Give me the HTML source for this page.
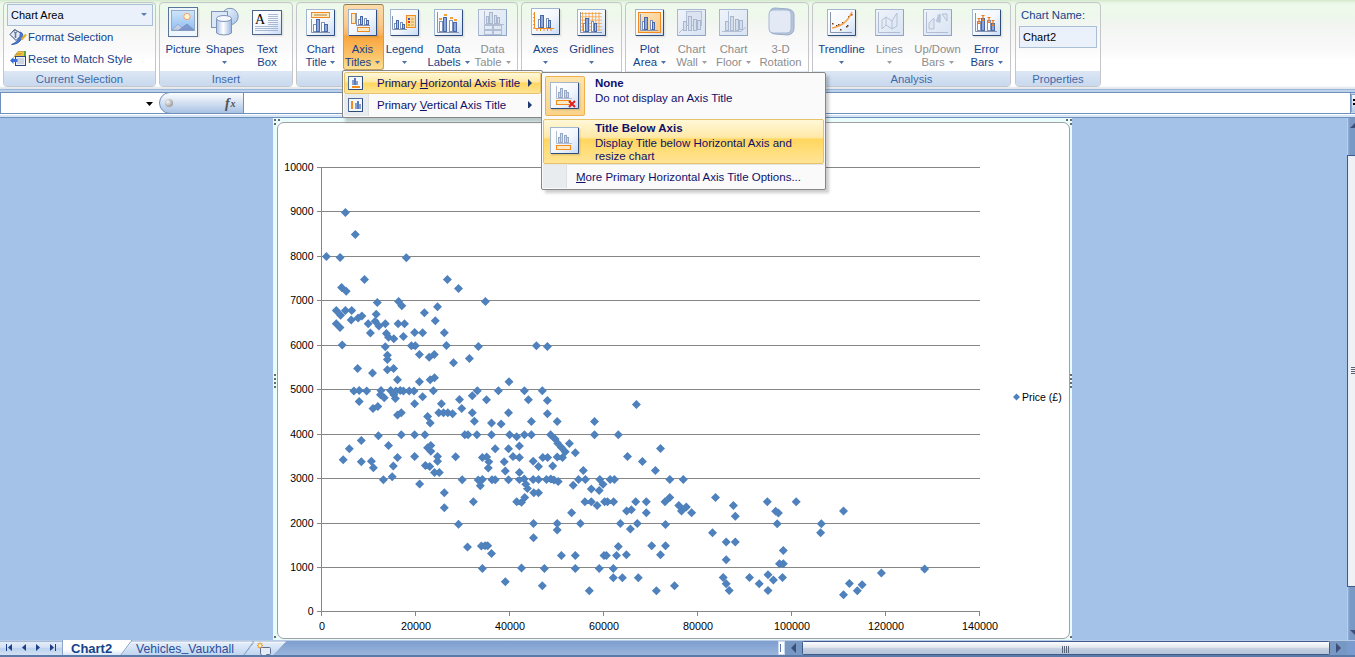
<!DOCTYPE html>
<html><head><meta charset="utf-8">
<style>
*{margin:0;padding:0;box-sizing:border-box}
html,body{width:1355px;height:657px;overflow:hidden;background:#a4c2e8;font-family:"Liberation Sans",sans-serif;font-size:11.3px;color:#15428b}
.a{position:absolute}
#ribbon{left:0;top:0;width:1355px;height:89px;background:linear-gradient(#d2e8cb 0px,#e4f4e0 2px,#eefaec 5px,#edf8ea 14px,#f1f5ef 24px,#f6f7f6 38px,#f9f9f9 50px,#ffffff 60px,#ffffff 86px,#e2e5e9 88px)}
.grp{position:absolute;top:2px;height:85px;border:1px solid #c4c6c9;border-radius:4px;background:linear-gradient(rgba(255,255,255,0) 0,rgba(255,255,255,.2) 40px,rgba(255,255,255,.5) 68px)}
.glab{position:absolute;left:0;right:0;bottom:0;height:15px;background:linear-gradient(#dde7f5,#c8d8ee);color:#3e6aaa;text-align:center;line-height:17px;border-radius:0 0 3px 3px}
.btn{position:absolute;text-align:center;line-height:13px;white-space:nowrap}
.dis{color:#8d8d8d}
.ico{position:absolute}
.mt{color:#10106a;line-height:13px;white-space:nowrap;font-size:11.5px}
.lbl{width:80px;text-align:center;line-height:13px;white-space:nowrap;font-size:11.3px}
.ylab{left:270px;width:43.5px;text-align:right;font-size:10.5px;color:#000;line-height:12px}
.xlab{top:620px;width:60px;text-align:center;font-size:10.8px;color:#000;line-height:12px}
</style></head><body>
<div id="ribbon" class="a">
  <!-- Current Selection -->
  <div class="grp" style="left:3px;width:153px">
    <div class="a" style="left:3px;top:1px;width:146px;height:22px;border:1px solid #a9bfd6;background:#eaf1fb;color:#000;line-height:20px;padding-left:3px;font-size:11px">Chart Area</div>
    <div class="a" style="left:24px;top:28px;color:#15428b;line-height:13px;white-space:nowrap">Format Selection</div>
    <div class="a" style="left:24px;top:50px;color:#15428b;line-height:13px;white-space:nowrap">Reset to Match Style</div>
    <div class="glab">Current Selection</div>
  </div>
  <!-- Insert -->
  <div class="grp" style="left:159px;width:134px">
    <div class="glab">Insert</div>
  </div>
  <!-- Labels -->
  <div class="grp" style="left:296px;width:222px">
    <div class="glab">Labels</div>
  </div>
  <!-- Axes -->
  <div class="grp" style="left:521px;width:101px">
    <div class="glab">Axes</div>
  </div>
  <!-- Background -->
  <div class="grp" style="left:625px;width:184px">
    <div class="glab">Background</div>
  </div>
  <!-- Analysis -->
  <div class="grp" style="left:812px;width:199px">
    <div class="glab">Analysis</div>
  </div>
  <!-- Properties -->
  <div class="grp" style="left:1015px;width:86px">
    <div class="a" style="left:5px;top:6px;color:#15428b;line-height:13px;white-space:nowrap">Chart Name:</div>
    <div class="a" style="left:3px;top:23px;width:78px;height:22px;border:1px solid #a9bfd6;background:#eaf1fb;color:#000;line-height:20px;padding-left:3px;font-size:11px">Chart2</div>
    <div class="glab">Properties</div>
  </div>
</div>
<div class="a" style="left:343px;top:4px;width:41px;height:66px;border:1px solid #c2a060;border-top-color:#8e7a50;border-radius:3px;background:linear-gradient(#fcdcac 0px,#fbc98a 20px,#f9b25c 30px,#f8a43c 31px,#fbc56c 52px,#fde396 66px)"></div>
<div class="a lbl" style="left:143px;top:43px;color:#15428b">Picture</div>
<div class="a lbl" style="left:185px;top:43px;color:#15428b">Shapes</div>
<div class="a lbl" style="left:227px;top:43px;color:#15428b">Text</div>
<div class="a lbl" style="left:227px;top:56px;color:#15428b">Box</div>
<div class="a lbl" style="left:280.5px;top:43px;color:#15428b">Chart</div>
<div class="a" style="left:305.5px;top:56px;color:#15428b;line-height:13px;white-space:nowrap;font-size:11.3px">Title</div>
<div class="a lbl" style="left:322.5px;top:43px;color:#15428b">Axis</div>
<div class="a" style="left:344.7px;top:56px;color:#15428b;line-height:13px;white-space:nowrap;font-size:11.3px">Titles</div>
<div class="a lbl" style="left:364.5px;top:43px;color:#15428b">Legend</div>
<div class="a lbl" style="left:408.5px;top:43px;color:#15428b">Data</div>
<div class="a" style="left:427.4px;top:56px;color:#15428b;line-height:13px;white-space:nowrap;font-size:11.3px">Labels</div>
<div class="a lbl" style="left:452.5px;top:43px;color:#8d8d8d">Data</div>
<div class="a" style="left:474.5px;top:56px;color:#8d8d8d;line-height:13px;white-space:nowrap;font-size:11.3px">Table</div>
<div class="a lbl" style="left:505.5px;top:43px;color:#15428b">Axes</div>
<div class="a lbl" style="left:551.5px;top:43px;color:#15428b">Gridlines</div>
<div class="a lbl" style="left:609.5px;top:43px;color:#15428b">Plot</div>
<div class="a" style="left:633.1px;top:56px;color:#15428b;line-height:13px;white-space:nowrap;font-size:11.3px">Area</div>
<div class="a lbl" style="left:651.5px;top:43px;color:#8d8d8d">Chart</div>
<div class="a" style="left:676.2px;top:56px;color:#8d8d8d;line-height:13px;white-space:nowrap;font-size:11.3px">Wall</div>
<div class="a lbl" style="left:693.5px;top:43px;color:#8d8d8d">Chart</div>
<div class="a" style="left:716.1px;top:56px;color:#8d8d8d;line-height:13px;white-space:nowrap;font-size:11.3px">Floor</div>
<div class="a lbl" style="left:740.5px;top:43px;color:#8d8d8d">3-D</div>
<div class="a lbl" style="left:740.5px;top:56px;color:#8d8d8d">Rotation</div>
<div class="a lbl" style="left:801.5px;top:43px;color:#15428b">Trendline</div>
<div class="a lbl" style="left:849.5px;top:43px;color:#8d8d8d">Lines</div>
<div class="a lbl" style="left:897.5px;top:43px;color:#8d8d8d">Up/Down</div>
<div class="a" style="left:921.4px;top:56px;color:#8d8d8d;line-height:13px;white-space:nowrap;font-size:11.3px">Bars</div>
<div class="a lbl" style="left:946.5px;top:43px;color:#15428b">Error</div>
<div class="a" style="left:970.4px;top:56px;color:#15428b;line-height:13px;white-space:nowrap;font-size:11.3px">Bars</div>
<svg class="a" style="left:0;top:0" width="1355" height="89">
<defs>
<linearGradient id="gbox" x1="0" y1="0" x2="1" y2="1"><stop offset="0" stop-color="#ffffff"/><stop offset=".55" stop-color="#f3f7fd"/><stop offset="1" stop-color="#c9dbf6"/></linearGradient>
<linearGradient id="gdis" x1="0" y1="0" x2="1" y2="1"><stop offset="0" stop-color="#f0f4fa"/><stop offset="1" stop-color="#d8e3f3"/></linearGradient>
<linearGradient id="gbar" x1="0" y1="0" x2="1" y2="0"><stop offset="0" stop-color="#5f7fc4"/><stop offset=".5" stop-color="#a8bde8"/><stop offset="1" stop-color="#5a78b8"/></linearGradient>
<linearGradient id="gorg" x1="0" y1="0" x2="1" y2="1"><stop offset="0" stop-color="#fde3b8"/><stop offset="1" stop-color="#f9c98a"/></linearGradient>
<linearGradient id="gsky" x1="0" y1="0" x2="0" y2="1"><stop offset="0" stop-color="#cfe6fb"/><stop offset="1" stop-color="#8fbdf0"/></linearGradient>
<linearGradient id="gshape" x1="0" y1="0" x2="1" y2="1"><stop offset="0" stop-color="#f2f7fe"/><stop offset="1" stop-color="#a9c4ea"/></linearGradient>
<linearGradient id="gcyl" x1="0" y1="0" x2="1" y2="0"><stop offset="0" stop-color="#a9c2e6"/><stop offset=".45" stop-color="#ffffff"/><stop offset="1" stop-color="#9ab6e0"/></linearGradient>
</defs>
<rect x="169.5" y="8.5" width="30" height="29" fill="#000" opacity=".08"/><rect x="168.5" y="7.5" width="29" height="29" fill="#eef6fd" stroke="#5a7399"/><rect x="171.5" y="10.5" width="23" height="20" fill="url(#gsky)" stroke="#93a9c8"/><circle cx="187" cy="16.5" r="3.2" fill="#fff4d0" stroke="#f4a070"/><path d="M172 30L178 24L184 30z" fill="#c4cde6" stroke="#8a9ac0" stroke-width=".6"/><path d="M179 30L187 24L194 30z" fill="#7e98d0" stroke="#6f86bb" stroke-width=".6"/>
<circle cx="230" cy="16.5" r="8.2" fill="url(#gshape)" stroke="#7e93b6"/><rect x="211.5" y="11.5" width="16" height="16" fill="#dce8f8" stroke="#7e93b6"/><path d="M216.5 18.5V33A8 3 0 0 0 231.5 33V18.5" fill="url(#gcyl)" stroke="#7e93b6"/><ellipse cx="224" cy="18.5" rx="7.5" ry="3" fill="#f4f8fe" stroke="#7e93b6"/>
<path d="M222 61h5l-2.5 3z" fill="#4e6fa8"/>
<rect x="253.5" y="11.5" width="30" height="25" fill="#000" opacity=".08"/><rect x="252.5" y="10.5" width="29" height="24" fill="url(#gbox)" stroke="#4d648c"/><text x="255" y="24" font-family="Liberation Serif" font-size="14" fill="#000">A</text><path d="M268 14.5H278" stroke="#8a9fc0" stroke-width=".7"/><path d="M268 16.5H278" stroke="#8a9fc0" stroke-width=".7"/><path d="M268 18.5H278" stroke="#8a9fc0" stroke-width=".7"/><path d="M268 20.5H278" stroke="#8a9fc0" stroke-width=".7"/><path d="M268 22.5H278" stroke="#8a9fc0" stroke-width=".7"/><path d="M268 24.5H278" stroke="#8a9fc0" stroke-width=".7"/><path d="M255 26.5H278" stroke="#8a9fc0" stroke-width=".7"/><path d="M255 28.5H278" stroke="#8a9fc0" stroke-width=".7"/><path d="M255 30.5H278" stroke="#8a9fc0" stroke-width=".7"/>
<rect x="307.5" y="10.5" width="29" height="27" fill="#000" opacity=".08"/><rect x="306.5" y="9.5" width="28" height="26" fill="url(#gbox)" stroke="#a3b6d0"/><path d="M334.5 10V35.5H307" stroke="#2f4d7c" fill="none"/><rect x="311.5" y="12.5" width="18" height="5" fill="#fde9c4" stroke="#f28a1e"/><path d="M314 15H327" stroke="#a88438"/><path d="M311.5 19V32.5H330" stroke="#8795b0" fill="none"/><rect x="313.5" y="24.5" width="3" height="7" fill="#fdfeff" stroke="#7d93bd"/><rect x="316.5" y="19.5" width="3" height="12" fill="url(#gbar)" stroke="#4a67a6"/><rect x="321.5" y="22.5" width="3" height="9" fill="#fdfeff" stroke="#7d93bd"/><rect x="324.5" y="24.5" width="3" height="7" fill="url(#gbar)" stroke="#4a67a6"/>
<path d="M330 61h5l-2.5 3z" fill="#4e6fa8"/>
<rect x="349.5" y="10.5" width="29" height="27" fill="#000" opacity=".08"/><rect x="348.5" y="9.5" width="28" height="26" fill="url(#gbox)" stroke="#a3b6d0"/><path d="M376.5 10V35.5H349" stroke="#2f4d7c" fill="none"/><rect x="351.5" y="13.5" width="4" height="10" fill="#fde9c4" stroke="#f28a1e"/><path d="M356.5 13V25.5H370" stroke="#8795b0" fill="none"/><rect x="358.5" y="19.5" width="2" height="5" fill="#fdfeff" stroke="#7d93bd"/><rect x="360.5" y="16.5" width="2" height="8" fill="url(#gbar)" stroke="#4a67a6"/><rect x="364.5" y="18.5" width="2" height="6" fill="#fdfeff" stroke="#7d93bd"/><rect x="366.5" y="20.5" width="2" height="4" fill="url(#gbar)" stroke="#4a67a6"/><rect x="357.5" y="27.5" width="12" height="4" fill="#fde9c4" stroke="#f28a1e"/>
<path d="M375 61h5l-2.5 3z" fill="#4e6fa8"/>
<rect x="391.5" y="10.5" width="29" height="27" fill="#000" opacity=".08"/><rect x="390.5" y="9.5" width="28" height="26" fill="url(#gbox)" stroke="#a3b6d0"/><path d="M418.5 10V35.5H391" stroke="#2f4d7c" fill="none"/><path d="M392.5 16V29.5H407" stroke="#8795b0" fill="none"/><rect x="394.5" y="23.5" width="2" height="5" fill="#fdfeff" stroke="#7d93bd"/><rect x="396.5" y="20.5" width="2" height="8" fill="url(#gbar)" stroke="#4a67a6"/><rect x="400.5" y="22.5" width="2" height="6" fill="#fdfeff" stroke="#7d93bd"/><rect x="402.5" y="24.5" width="2" height="4" fill="url(#gbar)" stroke="#4a67a6"/><rect x="406.5" y="15.5" width="9" height="12" fill="#fbd9a0" stroke="#f28a1e"/><rect x="408" y="18" width="2" height="2" fill="#3050d0"/><path d="M411 19H414" stroke="#c8a060"/><rect x="408" y="21" width="2" height="2" fill="#e03030"/><path d="M411 22H414" stroke="#c8a060"/><rect x="408" y="24" width="2" height="2" fill="#e0b000"/><path d="M411 25H414" stroke="#c8a060"/>
<path d="M402 61h5l-2.5 3z" fill="#4e6fa8"/>
<rect x="435.5" y="10.5" width="29" height="27" fill="#000" opacity=".08"/><rect x="434.5" y="9.5" width="28" height="26" fill="url(#gbox)" stroke="#a3b6d0"/><path d="M462.5 10V35.5H435" stroke="#2f4d7c" fill="none"/><path d="M437.5 12V32.5H459" stroke="#8795b0" fill="none"/><rect x="439.5" y="21.5" width="3" height="10" fill="#fdfeff" stroke="#7d93bd"/><rect x="443.5" y="17.5" width="3" height="14" fill="url(#gbar)" stroke="#4a67a6"/><rect x="449.5" y="20.5" width="3" height="11" fill="#fdfeff" stroke="#7d93bd"/><rect x="453.5" y="22.5" width="3" height="9" fill="url(#gbar)" stroke="#4a67a6"/><rect x="439" y="18" width="3" height="2" fill="#f7a030"/><rect x="444" y="14" width="3" height="2" fill="#f7a030"/><rect x="450" y="17" width="3" height="2" fill="#f7a030"/><rect x="454" y="19" width="3" height="2" fill="#f7a030"/>
<path d="M465 61h5l-2.5 3z" fill="#4e6fa8"/>
<rect x="478.5" y="9.5" width="28" height="26" fill="url(#gdis)" stroke="#a9b8cf"/><path d="M506.5 10V35.5H479" stroke="#8fa3c2" fill="none"/><path d="M484.5 11V24.5H504" stroke="#b0bdd2" fill="none"/><rect x="486.5" y="16.5" width="2" height="7" fill="#d5deec" stroke="#a9b6cc"/><rect x="489.5" y="12.5" width="3" height="11" fill="#d5deec" stroke="#a9b6cc"/><rect x="494.5" y="15.5" width="2" height="8" fill="#d5deec" stroke="#a9b6cc"/><rect x="497.5" y="17.5" width="2" height="6" fill="#d5deec" stroke="#a9b6cc"/><rect x="484.5" y="25.5" width="8" height="4" fill="none" stroke="#b0bdd2"/><rect x="493.5" y="25.5" width="8" height="4" fill="none" stroke="#b0bdd2"/><rect x="484.5" y="30.5" width="8" height="4" fill="none" stroke="#b0bdd2"/><rect x="493.5" y="30.5" width="8" height="4" fill="none" stroke="#b0bdd2"/>
<path d="M506 61h5l-2.5 3z" fill="#a0a0a0"/>
<rect x="532.5" y="9.5" width="29" height="27" fill="#000" opacity=".08"/><rect x="531.5" y="8.5" width="28" height="26" fill="url(#gbox)" stroke="#a3b6d0"/><path d="M559.5 9V34.5H532" stroke="#2f4d7c" fill="none"/><path d="M534.5 12V28.5H554" stroke="#f28a1e" fill="none"/><path d="M533 14.0H534" stroke="#f28a1e"/><path d="M537.0 29V31" stroke="#f28a1e"/><path d="M533 17.5H534" stroke="#f28a1e"/><path d="M540.5 29V31" stroke="#f28a1e"/><path d="M533 21.0H534" stroke="#f28a1e"/><path d="M544.0 29V31" stroke="#f28a1e"/><path d="M533 24.5H534" stroke="#f28a1e"/><path d="M547.5 29V31" stroke="#f28a1e"/><path d="M533 28.0H534" stroke="#f28a1e"/><path d="M551.0 29V31" stroke="#f28a1e"/><rect x="538.5" y="19.5" width="2" height="8" fill="#fdfeff" stroke="#7d93bd"/><rect x="540.5" y="15.5" width="3" height="12" fill="url(#gbar)" stroke="#4a67a6"/><rect x="546.5" y="18.5" width="2" height="9" fill="#fdfeff" stroke="#7d93bd"/><rect x="548.5" y="20.5" width="2" height="7" fill="url(#gbar)" stroke="#4a67a6"/>
<path d="M543 61h5l-2.5 3z" fill="#4e6fa8"/>
<rect x="578.5" y="10.5" width="29" height="27" fill="#000" opacity=".08"/><rect x="577.5" y="9.5" width="28" height="26" fill="url(#gbox)" stroke="#a3b6d0"/><path d="M605.5 10V35.5H578" stroke="#2f4d7c" fill="none"/><path d="M581 13.5H602" stroke="#f4a040" stroke-width=".8"/><path d="M582.5 12V31" stroke="#f4a040" stroke-width=".8"/><path d="M581 16.8H602" stroke="#f4a040" stroke-width=".8"/><path d="M585.8 12V31" stroke="#f4a040" stroke-width=".8"/><path d="M581 20.1H602" stroke="#f4a040" stroke-width=".8"/><path d="M589.1 12V31" stroke="#f4a040" stroke-width=".8"/><path d="M581 23.4H602" stroke="#f4a040" stroke-width=".8"/><path d="M592.4 12V31" stroke="#f4a040" stroke-width=".8"/><path d="M581 26.7H602" stroke="#f4a040" stroke-width=".8"/><path d="M595.7 12V31" stroke="#f4a040" stroke-width=".8"/><path d="M581 30.0H602" stroke="#f4a040" stroke-width=".8"/><path d="M599.0 12V31" stroke="#f4a040" stroke-width=".8"/><path d="M580.5 12V32.5H602" stroke="#8795b0" fill="none"/><rect x="583.5" y="23.5" width="2" height="8" fill="#fdfeff" stroke="#7d93bd"/><rect x="585.5" y="18.5" width="3" height="13" fill="url(#gbar)" stroke="#4a67a6"/><rect x="591.5" y="21.5" width="2" height="10" fill="#fdfeff" stroke="#7d93bd"/><rect x="594.5" y="23.5" width="2" height="8" fill="url(#gbar)" stroke="#4a67a6"/>
<path d="M589 61h5l-2.5 3z" fill="#4e6fa8"/>
<rect x="636.5" y="10.5" width="29" height="27" fill="#000" opacity=".08"/><rect x="635.5" y="9.5" width="28" height="26" fill="url(#gbox)" stroke="#a3b6d0"/><path d="M663.5 10V35.5H636" stroke="#2f4d7c" fill="none"/><rect x="638.5" y="12.5" width="22" height="20" fill="url(#gorg)" stroke="#f28a1e"/><path d="M640.5 14V30.5H658" stroke="#8795b0" fill="none"/><rect x="642.5" y="21.5" width="2" height="8" fill="#fdfeff" stroke="#7d93bd"/><rect x="644.5" y="17.5" width="3" height="12" fill="url(#gbar)" stroke="#4a67a6"/><rect x="650.5" y="20.5" width="2" height="9" fill="#fdfeff" stroke="#7d93bd"/><rect x="652.5" y="22.5" width="2" height="7" fill="url(#gbar)" stroke="#4a67a6"/>
<path d="M661 61h5l-2.5 3z" fill="#4e6fa8"/>
<rect x="677.5" y="9.5" width="28" height="26" fill="url(#gdis)" stroke="#a9b8cf"/><path d="M705.5 10V35.5H678" stroke="#8fa3c2" fill="none"/><rect x="686.5" y="11.5" width="15" height="14" fill="#dbe3f0" stroke="#b3c0d6"/><path d="M679 33L686 26" stroke="#b3c0d6"/><rect x="683.5" y="21.5" width="3" height="9" fill="#d5deec" stroke="#a9b6cc"/><rect x="688.5" y="16.5" width="3" height="14" fill="#d5deec" stroke="#a9b6cc"/><rect x="693.5" y="19.5" width="3" height="11" fill="#d5deec" stroke="#a9b6cc"/><rect x="697.5" y="20.5" width="3" height="9" fill="#d5deec" stroke="#a9b6cc"/>
<path d="M702 61h5l-2.5 3z" fill="#a0a0a0"/>
<rect x="719.5" y="9.5" width="28" height="26" fill="url(#gdis)" stroke="#a9b8cf"/><path d="M747.5 10V35.5H720" stroke="#8fa3c2" fill="none"/><path d="M728.5 11V27" stroke="#b3c0d6"/><path d="M722 31.5H741L746 27" stroke="#b3c0d6" fill="#d9e2ef"/><rect x="725.5" y="21.5" width="3" height="9" fill="#d5deec" stroke="#a9b6cc"/><rect x="730.5" y="16.5" width="3" height="14" fill="#d5deec" stroke="#a9b6cc"/><rect x="735.5" y="19.5" width="3" height="11" fill="#d5deec" stroke="#a9b6cc"/><rect x="739.5" y="20.5" width="3" height="9" fill="#d5deec" stroke="#a9b6cc"/>
<path d="M746 61h5l-2.5 3z" fill="#a0a0a0"/>
<path d="M770 13Q770 8 775 8L788 9Q794 10 794 15V28Q794 34 788 35L775 34Q770 34 770 29z" fill="#b5c4dc" stroke="#9aaccb"/><path d="M769 14Q769 10 773 10H787Q791 10 791 14V29Q791 33 787 33H773Q769 33 769 29z" fill="#e3eaf6" stroke="#a8b8d2"/>
<rect x="828.5" y="10.5" width="29" height="27" fill="#000" opacity=".08"/><rect x="827.5" y="9.5" width="28" height="26" fill="url(#gbox)" stroke="#a3b6d0"/><path d="M855.5 10V35.5H828" stroke="#2f4d7c" fill="none"/><path d="M830.5 12V32.5H852" stroke="#8795b0" fill="none"/><rect x="832" y="23" width="1.5" height="1.5" fill="#6a3a20"/><rect x="836" y="25" width="1.5" height="1.5" fill="#6a3a20"/><rect x="838" y="24" width="1.5" height="1.5" fill="#6a3a20"/><rect x="842" y="22" width="1.5" height="1.5" fill="#6a3a20"/><rect x="840" y="29" width="1.5" height="1.5" fill="#6a3a20"/><rect x="846" y="26" width="1.5" height="1.5" fill="#6a3a20"/><rect x="847" y="25" width="1.5" height="1.5" fill="#6a3a20"/><rect x="848" y="16" width="1.5" height="1.5" fill="#6a3a20"/><rect x="851" y="14" width="1.5" height="1.5" fill="#6a3a20"/><path d="M832 28Q846 26 852 12" stroke="#f7a040" stroke-width="1.4" fill="none"/>
<path d="M839 61h5l-2.5 3z" fill="#4e6fa8"/>
<rect x="875.5" y="9.5" width="28" height="26" fill="url(#gdis)" stroke="#a9b8cf"/><path d="M903.5 10V35.5H876" stroke="#8fa3c2" fill="none"/><path d="M878.5 12V32.5H900" stroke="#b0bdd2" fill="none"/><path d="M882 20L886 17L892 21L897 13V26L892 29L886 25L882 29z M886 17V25 M892 21V29" stroke="#b3c0d6" fill="none"/>
<path d="M887 61h5l-2.5 3z" fill="#a0a0a0"/>
<rect x="923.5" y="9.5" width="28" height="26" fill="url(#gdis)" stroke="#a9b8cf"/><path d="M951.5 10V35.5H924" stroke="#8fa3c2" fill="none"/><path d="M926.5 12V32.5H948" stroke="#b0bdd2" fill="none"/><path d="M929 29V23L934 18V29z M936 21L940 14V22z M942 14L947 21V14z" stroke="#b3c0d6" fill="#dfe6f1"/><rect x="937.5" y="14.5" width="3" height="8" fill="#b8c5da"/>
<path d="M949 61h5l-2.5 3z" fill="#a0a0a0"/>
<rect x="973.5" y="10.5" width="29" height="27" fill="#000" opacity=".08"/><rect x="972.5" y="9.5" width="28" height="26" fill="url(#gbox)" stroke="#a3b6d0"/><path d="M1000.5 10V35.5H973" stroke="#2f4d7c" fill="none"/><path d="M975.5 13V31.5H997" stroke="#8795b0" fill="none"/><rect x="977.5" y="21.5" width="3" height="9" fill="#fdfeff" stroke="#7d93bd"/><rect x="981.5" y="18.5" width="3" height="12" fill="url(#gbar)" stroke="#4a67a6"/><rect x="987.5" y="20.5" width="3" height="10" fill="#fdfeff" stroke="#7d93bd"/><rect x="991.5" y="23.5" width="3" height="7" fill="url(#gbar)" stroke="#4a67a6"/><path d="M977.5 18.5H980.5 M979 18V24 M977.5 23.5H980.5" stroke="#f07818" stroke-width="1.2"/><path d="M981.5 15.5H984.5 M983 15V21 M981.5 20.5H984.5" stroke="#f07818" stroke-width="1.2"/><path d="M987.5 17.5H990.5 M989 17V23 M987.5 22.5H990.5" stroke="#f07818" stroke-width="1.2"/><path d="M991.5 20.5H994.5 M993 20V26 M991.5 25.5H994.5" stroke="#f07818" stroke-width="1.2"/>
<path d="M998 61h5l-2.5 3z" fill="#4e6fa8"/>
</svg>
<svg class="a" style="left:0;top:0" width="160" height="70">
<g transform="translate(0,8)">
<path d="M14.5 21.5l-4.5 5 6 6 6.5-6.5z" fill="#e4ecf8" stroke="#2d4a80" stroke-width="1"/>
<path d="M15.5 30V24" stroke="#6a7a90" stroke-width="1.6"/>
<circle cx="15.5" cy="23.5" r="1.4" fill="none" stroke="#6a7a90"/>
<path d="M20 24c3.5 1 3.5 5 1 8s-5.5 4.5-9.5 4.5c3.5-1.5 6.5-3.5 7.5-6.5" fill="#4a78d0" stroke="#2d58b0" stroke-width=".8"/>
<path d="M21.5 31.5l4.5-5" stroke="#e0b030" stroke-width="2.2"/>
</g>
<g transform="translate(0,6)">
<path d="M14 50.5l4-5h7v5z" fill="#f0c040" stroke="#b08820" stroke-width=".6"/>
<path d="M15.5 49l2-2M17.5 49l2-2M19.5 49l2-2" stroke="#907020" stroke-width=".6"/>
<rect x="15.5" y="50.5" width="10" height="9" fill="#eef2f8" stroke="#2d4a80"/>
<path d="M17 53h7M17 55h7M17 57h7" stroke="#8aa0c0" stroke-width=".7"/>
<path d="M10 54.5l3.5-3.5v2h4v3h-4v2z" fill="#3a70d8"/>
<path d="M25 45v5" stroke="#40a040" stroke-width="1.6"/>
</g>
<path d="M141 13h6l-3 3z" fill="#5d7fb4"/>
</svg>
<!-- formula bar -->
<div class="a" style="left:0;top:88px;width:1355px;height:1px;background:#dfe7f1"></div>
<div class="a" style="left:0;top:89px;width:1355px;height:1px;background:#9fb6d6"></div>
<div class="a" style="left:0;top:90px;width:1355px;height:2px;background:#bcd1ea"></div>
<div class="a" style="left:0;top:92px;width:1355px;height:22px;background:#fff;border-top:1px solid #6f90bd;border-bottom:1px solid #6f90bd;border-left:1px solid #6f90bd"></div>
<div class="a" style="left:0;top:114px;width:1355px;height:1px;background:#fff"></div>
<div class="a" style="left:0;top:115px;width:1355px;height:2px;background:#d6e5f6"></div>
<div class="a" style="left:0;top:117px;width:1355px;height:1px;background:#6f90bd"></div>
<svg class="a" style="left:146px;top:102px" width="8" height="5"><path d="M0 0h7l-3.5 4z" fill="#000"/></svg>
<svg class="a" style="left:158px;top:92px" width="88" height="22"><defs><linearGradient id="fxg" x1="0" y1="0" x2="0" y2="1"><stop offset="0" stop-color="#ffffff"/><stop offset="1" stop-color="#a6c0e4"/></linearGradient><radialGradient id="fxc" cx=".35" cy=".35" r=".7"><stop offset="0" stop-color="#f4f4f4"/><stop offset="1" stop-color="#9a9a9a"/></radialGradient></defs>
<path d="M12 .5H85.5V21.5H12A10.5 10.5 0 0 1 12 .5z" fill="url(#fxg)" stroke="#6f90bd"/>
<circle cx="11" cy="11" r="4" fill="url(#fxc)"/>
<text x="67" y="15.5" font-family="Liberation Serif" font-style="italic" font-weight="bold" font-size="14" fill="#505050">f</text><text x="72.5" y="15" font-family="Liberation Serif" font-style="italic" font-weight="bold" font-size="10" fill="#505050">x</text></svg>
<div class="a" style="left:1350px;top:92px;width:5px;height:22px;background:#c5d8ef;border-left:1px solid #6f90bd;border-top:1px solid #6f90bd;border-bottom:1px solid #6f90bd"></div>
<div class="a" style="left:1351px;top:94px;width:4px;height:18px;background:linear-gradient(#f4f8fd,#b6cbe8);border-left:1px solid #8aa6cc;border-top:1px solid #8aa6cc"></div>
<div class="a" style="left:1353px;top:99px;width:2px;height:2px;background:#000"></div>
<div class="a" style="left:1353px;top:103px;width:2px;height:2px;background:#000"></div>

<!-- chart -->
<div class="a" style="left:273px;top:118px;width:799px;height:523px;background:#e8fcfc"></div>
<div class="a" style="left:277px;top:122px;width:793px;height:517px;background:#fff;border:1px solid #a0a0a0;border-radius:7px"></div>

<svg class="a" style="left:0;top:0" width="1355" height="657" shape-rendering="crispEdges">
<rect x="317" y="611" width="663" height="1" fill="#868686"/>
<rect x="317" y="567" width="663" height="1" fill="#868686"/>
<rect x="317" y="523" width="663" height="1" fill="#868686"/>
<rect x="317" y="478" width="663" height="1" fill="#868686"/>
<rect x="317" y="434" width="663" height="1" fill="#868686"/>
<rect x="317" y="389" width="663" height="1" fill="#868686"/>
<rect x="317" y="345" width="663" height="1" fill="#868686"/>
<rect x="317" y="300" width="663" height="1" fill="#868686"/>
<rect x="317" y="256" width="663" height="1" fill="#868686"/>
<rect x="317" y="211" width="663" height="1" fill="#868686"/>
<rect x="317" y="167" width="663" height="1" fill="#868686"/>
<rect x="321" y="167" width="1" height="449" fill="#868686"/>
<rect x="415" y="611" width="1" height="5" fill="#868686"/>
<rect x="509" y="611" width="1" height="5" fill="#868686"/>
<rect x="603" y="611" width="1" height="5" fill="#868686"/>
<rect x="697" y="611" width="1" height="5" fill="#868686"/>
<rect x="791" y="611" width="1" height="5" fill="#868686"/>
<rect x="885" y="611" width="1" height="5" fill="#868686"/>
<rect x="979" y="611" width="1" height="5" fill="#868686"/>
</svg>
<div class="a ylab" style="top:605px">0</div>
<div class="a ylab" style="top:561px">1000</div>
<div class="a ylab" style="top:517px">2000</div>
<div class="a ylab" style="top:472px">3000</div>
<div class="a ylab" style="top:428px">4000</div>
<div class="a ylab" style="top:383px">5000</div>
<div class="a ylab" style="top:339px">6000</div>
<div class="a ylab" style="top:294px">7000</div>
<div class="a ylab" style="top:250px">8000</div>
<div class="a ylab" style="top:205px">9000</div>
<div class="a ylab" style="top:161px">10000</div>
<div class="a xlab" style="left:292px">0</div>
<div class="a xlab" style="left:386px">20000</div>
<div class="a xlab" style="left:480px">40000</div>
<div class="a xlab" style="left:574px">60000</div>
<div class="a xlab" style="left:668px">80000</div>
<div class="a xlab" style="left:762px">100000</div>
<div class="a xlab" style="left:856px">120000</div>
<div class="a xlab" style="left:950px">140000</div>
<svg class="a" style="left:0;top:0" width="1355" height="657"><path fill="#4f81bd" d="M345.4 208.0l4.5 4.5l-4.5 4.5l-4.5 -4.5zM355.3 230.1l4.5 4.5l-4.5 4.5l-4.5 -4.5zM326.4 252.1l4.5 4.5l-4.5 4.5l-4.5 -4.5zM340.1 252.9l4.5 4.5l-4.5 4.5l-4.5 -4.5zM406.3 253.2l4.5 4.5l-4.5 4.5l-4.5 -4.5zM364.5 275.0l4.5 4.5l-4.5 4.5l-4.5 -4.5zM447.4 275.0l4.5 4.5l-4.5 4.5l-4.5 -4.5zM341.6 282.9l4.5 4.5l-4.5 4.5l-4.5 -4.5zM346.2 286.7l4.5 4.5l-4.5 4.5l-4.5 -4.5zM458.5 284.1l4.5 4.5l-4.5 4.5l-4.5 -4.5zM377.3 298.0l4.5 4.5l-4.5 4.5l-4.5 -4.5zM398.6 297.0l4.5 4.5l-4.5 4.5l-4.5 -4.5zM401.8 301.2l4.5 4.5l-4.5 4.5l-4.5 -4.5zM336.3 306.0l4.5 4.5l-4.5 4.5l-4.5 -4.5zM340.6 310.8l4.5 4.5l-4.5 4.5l-4.5 -4.5zM345.4 306.0l4.5 4.5l-4.5 4.5l-4.5 -4.5zM351.7 306.0l4.5 4.5l-4.5 4.5l-4.5 -4.5zM351.2 315.6l4.5 4.5l-4.5 4.5l-4.5 -4.5zM358.1 313.5l4.5 4.5l-4.5 4.5l-4.5 -4.5zM361.9 311.4l4.5 4.5l-4.5 4.5l-4.5 -4.5zM376.2 309.8l4.5 4.5l-4.5 4.5l-4.5 -4.5zM368.2 319.3l4.5 4.5l-4.5 4.5l-4.5 -4.5zM375.2 316.7l4.5 4.5l-4.5 4.5l-4.5 -4.5zM378.9 321.5l4.5 4.5l-4.5 4.5l-4.5 -4.5zM385.3 319.3l4.5 4.5l-4.5 4.5l-4.5 -4.5zM336.3 319.3l4.5 4.5l-4.5 4.5l-4.5 -4.5zM340.0 323.1l4.5 4.5l-4.5 4.5l-4.5 -4.5zM370.4 328.4l4.5 4.5l-4.5 4.5l-4.5 -4.5zM386.4 328.9l4.5 4.5l-4.5 4.5l-4.5 -4.5zM388.5 332.7l4.5 4.5l-4.5 4.5l-4.5 -4.5zM393.8 334.3l4.5 4.5l-4.5 4.5l-4.5 -4.5zM398.1 319.3l4.5 4.5l-4.5 4.5l-4.5 -4.5zM404.5 319.3l4.5 4.5l-4.5 4.5l-4.5 -4.5zM403.4 332.1l4.5 4.5l-4.5 4.5l-4.5 -4.5zM414.6 327.9l4.5 4.5l-4.5 4.5l-4.5 -4.5zM342.2 340.6l4.5 4.5l-4.5 4.5l-4.5 -4.5zM385.3 342.2l4.5 4.5l-4.5 4.5l-4.5 -4.5zM411.4 341.2l4.5 4.5l-4.5 4.5l-4.5 -4.5zM387.4 350.8l4.5 4.5l-4.5 4.5l-4.5 -4.5zM387.4 355.0l4.5 4.5l-4.5 4.5l-4.5 -4.5zM485.4 297.0l4.5 4.5l-4.5 4.5l-4.5 -4.5zM437.5 302.3l4.5 4.5l-4.5 4.5l-4.5 -4.5zM424.4 308.2l4.5 4.5l-4.5 4.5l-4.5 -4.5zM435.3 316.2l4.5 4.5l-4.5 4.5l-4.5 -4.5zM422.6 328.2l4.5 4.5l-4.5 4.5l-4.5 -4.5zM444.3 328.2l4.5 4.5l-4.5 4.5l-4.5 -4.5zM415.3 341.2l4.5 4.5l-4.5 4.5l-4.5 -4.5zM446.4 341.0l4.5 4.5l-4.5 4.5l-4.5 -4.5zM478.4 342.0l4.5 4.5l-4.5 4.5l-4.5 -4.5zM419.4 349.9l4.5 4.5l-4.5 4.5l-4.5 -4.5zM429.2 352.7l4.5 4.5l-4.5 4.5l-4.5 -4.5zM434.3 349.9l4.5 4.5l-4.5 4.5l-4.5 -4.5zM469.4 354.0l4.5 4.5l-4.5 4.5l-4.5 -4.5zM536.4 341.2l4.5 4.5l-4.5 4.5l-4.5 -4.5zM547.4 342.0l4.5 4.5l-4.5 4.5l-4.5 -4.5zM357.6 364.1l4.5 4.5l-4.5 4.5l-4.5 -4.5zM372.5 368.4l4.5 4.5l-4.5 4.5l-4.5 -4.5zM387.4 365.2l4.5 4.5l-4.5 4.5l-4.5 -4.5zM393.6 364.1l4.5 4.5l-4.5 4.5l-4.5 -4.5zM397.5 375.3l4.5 4.5l-4.5 4.5l-4.5 -4.5zM353.9 386.5l4.5 4.5l-4.5 4.5l-4.5 -4.5zM359.2 385.9l4.5 4.5l-4.5 4.5l-4.5 -4.5zM366.7 386.5l4.5 4.5l-4.5 4.5l-4.5 -4.5zM381.0 385.9l4.5 4.5l-4.5 4.5l-4.5 -4.5zM380.5 390.2l4.5 4.5l-4.5 4.5l-4.5 -4.5zM384.2 393.2l4.5 4.5l-4.5 4.5l-4.5 -4.5zM390.6 385.9l4.5 4.5l-4.5 4.5l-4.5 -4.5zM395.9 386.5l4.5 4.5l-4.5 4.5l-4.5 -4.5zM400.2 385.9l4.5 4.5l-4.5 4.5l-4.5 -4.5zM403.4 386.5l4.5 4.5l-4.5 4.5l-4.5 -4.5zM393.8 390.2l4.5 4.5l-4.5 4.5l-4.5 -4.5zM395.4 393.9l4.5 4.5l-4.5 4.5l-4.5 -4.5zM409.2 386.5l4.5 4.5l-4.5 4.5l-4.5 -4.5zM414.0 386.5l4.5 4.5l-4.5 4.5l-4.5 -4.5zM359.2 397.1l4.5 4.5l-4.5 4.5l-4.5 -4.5zM373.0 404.0l4.5 4.5l-4.5 4.5l-4.5 -4.5zM377.8 401.9l4.5 4.5l-4.5 4.5l-4.5 -4.5zM397.5 410.4l4.5 4.5l-4.5 4.5l-4.5 -4.5zM401.3 408.3l4.5 4.5l-4.5 4.5l-4.5 -4.5zM414.6 399.3l4.5 4.5l-4.5 4.5l-4.5 -4.5zM453.5 358.3l4.5 4.5l-4.5 4.5l-4.5 -4.5zM419.4 377.2l4.5 4.5l-4.5 4.5l-4.5 -4.5zM430.2 375.3l4.5 4.5l-4.5 4.5l-4.5 -4.5zM434.5 373.2l4.5 4.5l-4.5 4.5l-4.5 -4.5zM433.4 386.2l4.5 4.5l-4.5 4.5l-4.5 -4.5zM422.6 392.3l4.5 4.5l-4.5 4.5l-4.5 -4.5zM441.4 399.3l4.5 4.5l-4.5 4.5l-4.5 -4.5zM459.5 395.0l4.5 4.5l-4.5 4.5l-4.5 -4.5zM461.7 404.0l4.5 4.5l-4.5 4.5l-4.5 -4.5zM472.3 391.3l4.5 4.5l-4.5 4.5l-4.5 -4.5zM477.3 386.2l4.5 4.5l-4.5 4.5l-4.5 -4.5zM486.5 395.3l4.5 4.5l-4.5 4.5l-4.5 -4.5zM498.4 386.2l4.5 4.5l-4.5 4.5l-4.5 -4.5zM509.0 377.2l4.5 4.5l-4.5 4.5l-4.5 -4.5zM438.8 408.3l4.5 4.5l-4.5 4.5l-4.5 -4.5zM443.5 408.3l4.5 4.5l-4.5 4.5l-4.5 -4.5zM447.8 408.3l4.5 4.5l-4.5 4.5l-4.5 -4.5zM452.6 409.2l4.5 4.5l-4.5 4.5l-4.5 -4.5zM427.6 412.0l4.5 4.5l-4.5 4.5l-4.5 -4.5zM430.2 418.4l4.5 4.5l-4.5 4.5l-4.5 -4.5zM472.3 408.3l4.5 4.5l-4.5 4.5l-4.5 -4.5zM474.4 416.8l4.5 4.5l-4.5 4.5l-4.5 -4.5zM491.5 418.4l4.5 4.5l-4.5 4.5l-4.5 -4.5zM501.1 419.5l4.5 4.5l-4.5 4.5l-4.5 -4.5zM508.5 408.3l4.5 4.5l-4.5 4.5l-4.5 -4.5zM524.4 386.2l4.5 4.5l-4.5 4.5l-4.5 -4.5zM542.3 386.2l4.5 4.5l-4.5 4.5l-4.5 -4.5zM528.4 395.3l4.5 4.5l-4.5 4.5l-4.5 -4.5zM547.4 396.1l4.5 4.5l-4.5 4.5l-4.5 -4.5zM547.4 409.2l4.5 4.5l-4.5 4.5l-4.5 -4.5zM531.4 417.0l4.5 4.5l-4.5 4.5l-4.5 -4.5zM557.2 417.0l4.5 4.5l-4.5 4.5l-4.5 -4.5zM594.5 417.0l4.5 4.5l-4.5 4.5l-4.5 -4.5zM378.4 431.2l4.5 4.5l-4.5 4.5l-4.5 -4.5zM401.3 430.2l4.5 4.5l-4.5 4.5l-4.5 -4.5zM414.6 430.2l4.5 4.5l-4.5 4.5l-4.5 -4.5zM361.3 436.0l4.5 4.5l-4.5 4.5l-4.5 -4.5zM349.3 444.3l4.5 4.5l-4.5 4.5l-4.5 -4.5zM388.5 441.1l4.5 4.5l-4.5 4.5l-4.5 -4.5zM343.2 455.2l4.5 4.5l-4.5 4.5l-4.5 -4.5zM361.3 457.3l4.5 4.5l-4.5 4.5l-4.5 -4.5zM371.4 456.8l4.5 4.5l-4.5 4.5l-4.5 -4.5zM373.4 463.2l4.5 4.5l-4.5 4.5l-4.5 -4.5zM397.5 453.1l4.5 4.5l-4.5 4.5l-4.5 -4.5zM393.3 461.4l4.5 4.5l-4.5 4.5l-4.5 -4.5zM414.6 452.0l4.5 4.5l-4.5 4.5l-4.5 -4.5zM383.4 475.2l4.5 4.5l-4.5 4.5l-4.5 -4.5zM392.2 472.2l4.5 4.5l-4.5 4.5l-4.5 -4.5zM424.9 430.2l4.5 4.5l-4.5 4.5l-4.5 -4.5zM464.8 430.2l4.5 4.5l-4.5 4.5l-4.5 -4.5zM468.0 430.2l4.5 4.5l-4.5 4.5l-4.5 -4.5zM476.9 430.2l4.5 4.5l-4.5 4.5l-4.5 -4.5zM491.5 430.2l4.5 4.5l-4.5 4.5l-4.5 -4.5zM509.6 430.2l4.5 4.5l-4.5 4.5l-4.5 -4.5zM427.6 443.3l4.5 4.5l-4.5 4.5l-4.5 -4.5zM430.8 441.1l4.5 4.5l-4.5 4.5l-4.5 -4.5zM430.8 446.7l4.5 4.5l-4.5 4.5l-4.5 -4.5zM437.5 452.0l4.5 4.5l-4.5 4.5l-4.5 -4.5zM437.5 456.8l4.5 4.5l-4.5 4.5l-4.5 -4.5zM455.6 452.2l4.5 4.5l-4.5 4.5l-4.5 -4.5zM425.4 461.1l4.5 4.5l-4.5 4.5l-4.5 -4.5zM429.7 462.1l4.5 4.5l-4.5 4.5l-4.5 -4.5zM434.5 468.0l4.5 4.5l-4.5 4.5l-4.5 -4.5zM439.3 468.0l4.5 4.5l-4.5 4.5l-4.5 -4.5zM482.4 453.1l4.5 4.5l-4.5 4.5l-4.5 -4.5zM486.7 452.5l4.5 4.5l-4.5 4.5l-4.5 -4.5zM488.8 457.3l4.5 4.5l-4.5 4.5l-4.5 -4.5zM488.3 463.5l4.5 4.5l-4.5 4.5l-4.5 -4.5zM495.2 444.3l4.5 4.5l-4.5 4.5l-4.5 -4.5zM508.5 444.3l4.5 4.5l-4.5 4.5l-4.5 -4.5zM504.2 457.3l4.5 4.5l-4.5 4.5l-4.5 -4.5zM505.3 466.4l4.5 4.5l-4.5 4.5l-4.5 -4.5zM419.6 479.4l4.5 4.5l-4.5 4.5l-4.5 -4.5zM462.2 475.2l4.5 4.5l-4.5 4.5l-4.5 -4.5zM478.2 475.4l4.5 4.5l-4.5 4.5l-4.5 -4.5zM482.4 474.9l4.5 4.5l-4.5 4.5l-4.5 -4.5zM480.3 481.3l4.5 4.5l-4.5 4.5l-4.5 -4.5zM492.0 475.2l4.5 4.5l-4.5 4.5l-4.5 -4.5zM495.2 475.2l4.5 4.5l-4.5 4.5l-4.5 -4.5zM508.5 475.2l4.5 4.5l-4.5 4.5l-4.5 -4.5zM516.7 432.3l4.5 4.5l-4.5 4.5l-4.5 -4.5zM524.4 430.2l4.5 4.5l-4.5 4.5l-4.5 -4.5zM531.4 430.2l4.5 4.5l-4.5 4.5l-4.5 -4.5zM550.6 430.2l4.5 4.5l-4.5 4.5l-4.5 -4.5zM555.1 434.4l4.5 4.5l-4.5 4.5l-4.5 -4.5zM557.7 438.7l4.5 4.5l-4.5 4.5l-4.5 -4.5zM561.4 443.0l4.5 4.5l-4.5 4.5l-4.5 -4.5zM565.2 447.2l4.5 4.5l-4.5 4.5l-4.5 -4.5zM569.4 439.0l4.5 4.5l-4.5 4.5l-4.5 -4.5zM575.3 448.3l4.5 4.5l-4.5 4.5l-4.5 -4.5zM594.5 430.2l4.5 4.5l-4.5 4.5l-4.5 -4.5zM519.4 441.4l4.5 4.5l-4.5 4.5l-4.5 -4.5zM513.0 452.0l4.5 4.5l-4.5 4.5l-4.5 -4.5zM519.4 453.1l4.5 4.5l-4.5 4.5l-4.5 -4.5zM533.2 456.8l4.5 4.5l-4.5 4.5l-4.5 -4.5zM538.5 462.1l4.5 4.5l-4.5 4.5l-4.5 -4.5zM542.8 453.1l4.5 4.5l-4.5 4.5l-4.5 -4.5zM547.6 453.1l4.5 4.5l-4.5 4.5l-4.5 -4.5zM557.2 452.5l4.5 4.5l-4.5 4.5l-4.5 -4.5zM562.5 453.1l4.5 4.5l-4.5 4.5l-4.5 -4.5zM552.7 461.4l4.5 4.5l-4.5 4.5l-4.5 -4.5zM519.4 468.0l4.5 4.5l-4.5 4.5l-4.5 -4.5zM519.4 474.9l4.5 4.5l-4.5 4.5l-4.5 -4.5zM524.2 474.4l4.5 4.5l-4.5 4.5l-4.5 -4.5zM525.8 479.7l4.5 4.5l-4.5 4.5l-4.5 -4.5zM527.4 484.0l4.5 4.5l-4.5 4.5l-4.5 -4.5zM533.2 474.9l4.5 4.5l-4.5 4.5l-4.5 -4.5zM538.5 474.9l4.5 4.5l-4.5 4.5l-4.5 -4.5zM546.5 474.9l4.5 4.5l-4.5 4.5l-4.5 -4.5zM550.8 474.4l4.5 4.5l-4.5 4.5l-4.5 -4.5zM554.0 475.4l4.5 4.5l-4.5 4.5l-4.5 -4.5zM558.2 477.0l4.5 4.5l-4.5 4.5l-4.5 -4.5zM578.5 474.9l4.5 4.5l-4.5 4.5l-4.5 -4.5zM585.4 474.9l4.5 4.5l-4.5 4.5l-4.5 -4.5zM583.3 465.9l4.5 4.5l-4.5 4.5l-4.5 -4.5zM573.2 480.8l4.5 4.5l-4.5 4.5l-4.5 -4.5zM599.8 474.9l4.5 4.5l-4.5 4.5l-4.5 -4.5zM603.0 479.7l4.5 4.5l-4.5 4.5l-4.5 -4.5zM591.3 484.5l4.5 4.5l-4.5 4.5l-4.5 -4.5zM636.4 400.0l4.5 4.5l-4.5 4.5l-4.5 -4.5zM444.3 488.3l4.5 4.5l-4.5 4.5l-4.5 -4.5zM444.3 503.2l4.5 4.5l-4.5 4.5l-4.5 -4.5zM473.4 497.3l4.5 4.5l-4.5 4.5l-4.5 -4.5zM458.5 519.7l4.5 4.5l-4.5 4.5l-4.5 -4.5zM467.5 542.4l4.5 4.5l-4.5 4.5l-4.5 -4.5zM481.4 541.5l4.5 4.5l-4.5 4.5l-4.5 -4.5zM485.1 541.3l4.5 4.5l-4.5 4.5l-4.5 -4.5zM487.7 541.3l4.5 4.5l-4.5 4.5l-4.5 -4.5zM491.5 549.0l4.5 4.5l-4.5 4.5l-4.5 -4.5zM533.8 488.3l4.5 4.5l-4.5 4.5l-4.5 -4.5zM538.5 488.3l4.5 4.5l-4.5 4.5l-4.5 -4.5zM516.7 497.3l4.5 4.5l-4.5 4.5l-4.5 -4.5zM521.5 497.8l4.5 4.5l-4.5 4.5l-4.5 -4.5zM524.7 493.0l4.5 4.5l-4.5 4.5l-4.5 -4.5zM599.2 486.1l4.5 4.5l-4.5 4.5l-4.5 -4.5zM584.9 497.3l4.5 4.5l-4.5 4.5l-4.5 -4.5zM591.3 497.3l4.5 4.5l-4.5 4.5l-4.5 -4.5zM597.1 501.0l4.5 4.5l-4.5 4.5l-4.5 -4.5zM604.6 497.3l4.5 4.5l-4.5 4.5l-4.5 -4.5zM571.6 508.3l4.5 4.5l-4.5 4.5l-4.5 -4.5zM533.5 519.1l4.5 4.5l-4.5 4.5l-4.5 -4.5zM557.2 519.1l4.5 4.5l-4.5 4.5l-4.5 -4.5zM557.2 525.5l4.5 4.5l-4.5 4.5l-4.5 -4.5zM580.4 519.1l4.5 4.5l-4.5 4.5l-4.5 -4.5zM533.5 533.2l4.5 4.5l-4.5 4.5l-4.5 -4.5zM482.4 564.1l4.5 4.5l-4.5 4.5l-4.5 -4.5zM505.3 577.2l4.5 4.5l-4.5 4.5l-4.5 -4.5zM561.4 551.1l4.5 4.5l-4.5 4.5l-4.5 -4.5zM575.3 551.1l4.5 4.5l-4.5 4.5l-4.5 -4.5zM604.0 551.1l4.5 4.5l-4.5 4.5l-4.5 -4.5zM521.5 563.4l4.5 4.5l-4.5 4.5l-4.5 -4.5zM544.4 564.1l4.5 4.5l-4.5 4.5l-4.5 -4.5zM575.3 564.1l4.5 4.5l-4.5 4.5l-4.5 -4.5zM599.2 564.1l4.5 4.5l-4.5 4.5l-4.5 -4.5zM542.3 581.2l4.5 4.5l-4.5 4.5l-4.5 -4.5zM589.3 586.3l4.5 4.5l-4.5 4.5l-4.5 -4.5zM618.3 430.2l4.5 4.5l-4.5 4.5l-4.5 -4.5zM627.5 452.0l4.5 4.5l-4.5 4.5l-4.5 -4.5zM642.4 457.1l4.5 4.5l-4.5 4.5l-4.5 -4.5zM660.5 444.0l4.5 4.5l-4.5 4.5l-4.5 -4.5zM655.4 466.1l4.5 4.5l-4.5 4.5l-4.5 -4.5zM610.1 474.9l4.5 4.5l-4.5 4.5l-4.5 -4.5zM614.4 474.9l4.5 4.5l-4.5 4.5l-4.5 -4.5zM669.8 474.9l4.5 4.5l-4.5 4.5l-4.5 -4.5zM683.3 474.9l4.5 4.5l-4.5 4.5l-4.5 -4.5zM607.5 497.3l4.5 4.5l-4.5 4.5l-4.5 -4.5zM613.6 497.3l4.5 4.5l-4.5 4.5l-4.5 -4.5zM626.6 506.4l4.5 4.5l-4.5 4.5l-4.5 -4.5zM631.4 505.3l4.5 4.5l-4.5 4.5l-4.5 -4.5zM635.7 497.3l4.5 4.5l-4.5 4.5l-4.5 -4.5zM646.3 497.3l4.5 4.5l-4.5 4.5l-4.5 -4.5zM646.3 508.3l4.5 4.5l-4.5 4.5l-4.5 -4.5zM665.0 497.3l4.5 4.5l-4.5 4.5l-4.5 -4.5zM669.8 493.0l4.5 4.5l-4.5 4.5l-4.5 -4.5zM678.8 501.0l4.5 4.5l-4.5 4.5l-4.5 -4.5zM681.5 506.4l4.5 4.5l-4.5 4.5l-4.5 -4.5zM686.3 502.6l4.5 4.5l-4.5 4.5l-4.5 -4.5zM691.6 508.3l4.5 4.5l-4.5 4.5l-4.5 -4.5zM620.4 519.1l4.5 4.5l-4.5 4.5l-4.5 -4.5zM637.3 519.1l4.5 4.5l-4.5 4.5l-4.5 -4.5zM630.4 524.5l4.5 4.5l-4.5 4.5l-4.5 -4.5zM665.5 520.0l4.5 4.5l-4.5 4.5l-4.5 -4.5zM618.3 542.0l4.5 4.5l-4.5 4.5l-4.5 -4.5zM651.7 541.3l4.5 4.5l-4.5 4.5l-4.5 -4.5zM665.5 541.3l4.5 4.5l-4.5 4.5l-4.5 -4.5zM606.4 551.1l4.5 4.5l-4.5 4.5l-4.5 -4.5zM616.5 551.1l4.5 4.5l-4.5 4.5l-4.5 -4.5zM626.4 550.3l4.5 4.5l-4.5 4.5l-4.5 -4.5zM660.5 550.3l4.5 4.5l-4.5 4.5l-4.5 -4.5zM613.3 564.1l4.5 4.5l-4.5 4.5l-4.5 -4.5zM613.3 573.3l4.5 4.5l-4.5 4.5l-4.5 -4.5zM622.4 573.3l4.5 4.5l-4.5 4.5l-4.5 -4.5zM638.3 573.3l4.5 4.5l-4.5 4.5l-4.5 -4.5zM656.4 586.3l4.5 4.5l-4.5 4.5l-4.5 -4.5zM674.5 581.2l4.5 4.5l-4.5 4.5l-4.5 -4.5zM715.5 493.1l4.5 4.5l-4.5 4.5l-4.5 -4.5zM733.4 501.0l4.5 4.5l-4.5 4.5l-4.5 -4.5zM735.3 511.7l4.5 4.5l-4.5 4.5l-4.5 -4.5zM767.3 497.2l4.5 4.5l-4.5 4.5l-4.5 -4.5zM775.7 506.8l4.5 4.5l-4.5 4.5l-4.5 -4.5zM778.4 508.6l4.5 4.5l-4.5 4.5l-4.5 -4.5zM796.2 497.2l4.5 4.5l-4.5 4.5l-4.5 -4.5zM777.2 519.2l4.5 4.5l-4.5 4.5l-4.5 -4.5zM821.3 519.2l4.5 4.5l-4.5 4.5l-4.5 -4.5zM820.6 528.3l4.5 4.5l-4.5 4.5l-4.5 -4.5zM712.5 528.3l4.5 4.5l-4.5 4.5l-4.5 -4.5zM726.2 537.4l4.5 4.5l-4.5 4.5l-4.5 -4.5zM735.3 537.4l4.5 4.5l-4.5 4.5l-4.5 -4.5zM783.3 546.1l4.5 4.5l-4.5 4.5l-4.5 -4.5zM726.2 555.2l4.5 4.5l-4.5 4.5l-4.5 -4.5zM779.5 559.2l4.5 4.5l-4.5 4.5l-4.5 -4.5zM783.3 559.2l4.5 4.5l-4.5 4.5l-4.5 -4.5zM723.2 572.9l4.5 4.5l-4.5 4.5l-4.5 -4.5zM726.2 579.3l4.5 4.5l-4.5 4.5l-4.5 -4.5zM729.2 586.1l4.5 4.5l-4.5 4.5l-4.5 -4.5zM749.5 572.9l4.5 4.5l-4.5 4.5l-4.5 -4.5zM759.2 579.3l4.5 4.5l-4.5 4.5l-4.5 -4.5zM768.0 570.2l4.5 4.5l-4.5 4.5l-4.5 -4.5zM773.4 575.5l4.5 4.5l-4.5 4.5l-4.5 -4.5zM768.0 586.1l4.5 4.5l-4.5 4.5l-4.5 -4.5zM782.5 572.9l4.5 4.5l-4.5 4.5l-4.5 -4.5zM843.5 506.5l4.5 4.5l-4.5 4.5l-4.5 -4.5zM881.4 568.4l4.5 4.5l-4.5 4.5l-4.5 -4.5zM924.6 564.4l4.5 4.5l-4.5 4.5l-4.5 -4.5zM849.4 579.1l4.5 4.5l-4.5 4.5l-4.5 -4.5zM862.1 580.3l4.5 4.5l-4.5 4.5l-4.5 -4.5zM857.3 586.2l4.5 4.5l-4.5 4.5l-4.5 -4.5zM843.5 590.2l4.5 4.5l-4.5 4.5l-4.5 -4.5z"/></svg>
<svg class="a" style="left:0;top:0" width="1355" height="657">
<g fill="#6a6a6a">
<rect x="274" y="119" width="2" height="2"/><rect x="278" y="119" width="2" height="2"/><rect x="274" y="123" width="2" height="2"/>
<rect x="1066" y="119" width="2" height="2"/><rect x="1070" y="119" width="2" height="2"/><rect x="1070" y="123" width="2" height="2"/>
<rect x="274" y="374" width="2" height="2"/><rect x="274" y="378" width="2" height="2"/><rect x="274" y="382" width="2" height="2"/><rect x="274" y="386" width="2" height="2"/>
<rect x="1070" y="374" width="2" height="2"/><rect x="1070" y="378" width="2" height="2"/><rect x="1070" y="382" width="2" height="2"/><rect x="1070" y="386" width="2" height="2"/>
<rect x="274" y="636" width="2" height="2"/><rect x="1070" y="636" width="2" height="2"/>
</g></svg>
<div class="a" style="left:1012px;top:391px;width:9px;height:12px"><svg width="9" height="12"><path d="M4.5 2.5l3.5 3.5-3.5 3.5-3.5-3.5z" fill="#4f81bd"/></svg></div>
<div class="a" style="left:1022px;top:391px;font-size:10.5px;color:#000;line-height:12px">Price (&pound;)</div>

<!-- menu 1 -->
<div class="a" style="left:345px;top:74px;width:201px;height:48px;background:rgba(0,0,0,.2);filter:blur(1.5px)"></div>
<div class="a" style="left:342px;top:70px;width:201px;height:48px;background:#fafafa;border:1px solid #868686;border-radius:2px"></div>
<div class="a" style="left:344px;top:94px;width:25px;height:22px;background:#e9ecee;border-right:1px solid #dde0e3"></div>
<div class="a" style="left:344px;top:72px;width:197px;height:22px;border:1px solid #e6c26a;border-radius:2px;background:linear-gradient(#fff8d8 0%,#ffe9a8 45%,#ffd75e 50%,#ffe497 100%)"></div>
<div class="a" style="left:348px;top:76px;width:15px;height:14px"><svg width="15" height="14"><rect x=".5" y=".5" width="14" height="13" fill="#f4f8fd" stroke="#4e6b98"/><path d="M1 13.5H14.5V1" stroke="#2f4d7c" fill="none"/><rect x="4" y="4" width="2" height="5" fill="#8aa0cc"/><rect x="6" y="2" width="2" height="7" fill="#5b7bc0"/><rect x="8" y="5" width="2" height="4" fill="#8aa0cc"/><rect x="4" y="10" width="8" height="2" fill="#f28a1e"/></svg></div>
<div class="a" style="left:348px;top:98px;width:15px;height:14px"><svg width="15" height="14"><rect x=".5" y=".5" width="14" height="13" fill="#f4f8fd" stroke="#4e6b98"/><path d="M1 13.5H14.5V1" stroke="#2f4d7c" fill="none"/><rect x="3" y="3" width="2" height="8" fill="#f28a1e"/><rect x="7" y="5" width="2" height="6" fill="#8aa0cc"/><rect x="9" y="3" width="2" height="8" fill="#5b7bc0"/><rect x="11" y="6" width="2" height="5" fill="#8aa0cc"/></svg></div>
<div class="a mt" style="left:377px;top:77px">Primary <u>H</u>orizontal Axis Title</div>
<div class="a mt" style="left:377px;top:99px">Primary <u>V</u>ertical Axis Title</div>
<svg class="a" style="left:527px;top:78px" width="6" height="30"><path d="M1 1l4 4-4 4z M1 23l4 4-4 4z" fill="#1e3a6e"/></svg>

<!-- submenu -->
<div class="a" style="left:545px;top:76px;width:284px;height:117px;background:rgba(0,0,0,.2);filter:blur(1.5px)"></div>
<div class="a" style="left:541px;top:72px;width:285px;height:118px;background:#fafafa;border:1px solid #868686;border-radius:2px"></div>
<div class="a" style="left:543px;top:164px;width:24px;height:24px;background:#e9ecee;border-right:1px solid #dde0e3"></div>
<div class="a" style="left:543px;top:164px;width:281px;height:1px;background:#e5e5e5"></div>
<div class="a" style="left:545px;top:76px;width:40px;height:40px;border:1px solid #f1b04c;border-radius:2px;background:linear-gradient(#fde4ae,#fbd38a)"></div>
<div class="a" style="left:543px;top:119px;width:281px;height:45px;border:1px solid #e6c26a;border-radius:2px;background:linear-gradient(#fff8d8 0%,#ffe9a8 40%,#ffd75e 45%,#ffe497 100%)"></div>
<div class="a mt" style="left:595px;top:77px;font-weight:bold">None</div>
<div class="a mt" style="left:595px;top:92px">Do not display an Axis Title</div>
<div class="a mt" style="left:595px;top:122px;font-weight:bold">Title Below Axis</div>
<div class="a mt" style="left:595px;top:137px">Display Title below Horizontal Axis and</div>
<div class="a mt" style="left:595px;top:150px">resize chart</div>
<div class="a mt" style="left:576px;top:171px"><u>M</u>ore Primary Horizontal Axis Title Options...</div>
<svg class="a" style="left:0;top:0" width="1355" height="657"><defs>
<linearGradient id="sbox" x1="0" y1="0" x2="1" y2="1"><stop offset="0" stop-color="#ffffff"/><stop offset=".55" stop-color="#f3f7fd"/><stop offset="1" stop-color="#c9dbf6"/></linearGradient>
<linearGradient id="sdis" x1="0" y1="0" x2="1" y2="1"><stop offset="0" stop-color="#f0f4fa"/><stop offset="1" stop-color="#d8e3f3"/></linearGradient>
<linearGradient id="sbar" x1="0" y1="0" x2="1" y2="0"><stop offset="0" stop-color="#5f7fc4"/><stop offset=".5" stop-color="#a8bde8"/><stop offset="1" stop-color="#5a78b8"/></linearGradient>
<linearGradient id="sorg" x1="0" y1="0" x2="1" y2="1"><stop offset="0" stop-color="#fde3b8"/><stop offset="1" stop-color="#f9c98a"/></linearGradient>
<linearGradient id="ssky" x1="0" y1="0" x2="0" y2="1"><stop offset="0" stop-color="#cfe6fb"/><stop offset="1" stop-color="#8fbdf0"/></linearGradient>
<linearGradient id="sshape" x1="0" y1="0" x2="1" y2="1"><stop offset="0" stop-color="#f2f7fe"/><stop offset="1" stop-color="#a9c4ea"/></linearGradient>
<linearGradient id="scyl" x1="0" y1="0" x2="1" y2="0"><stop offset="0" stop-color="#a9c2e6"/><stop offset=".45" stop-color="#ffffff"/><stop offset="1" stop-color="#9ab6e0"/></linearGradient>
</defs><rect x="551.5" y="83.5" width="29" height="27" fill="#000" opacity=".1"/><rect x="550.5" y="82.5" width="28" height="26" fill="url(#sbox)" stroke="#a3b6d0"/><path d="M578.5 83V108.5H551" stroke="#2f4d7c" fill="none"/><path d="M556.5 86V98.5H572" stroke="#b0bdd2" fill="none"/><rect x="558.5" y="92.5" width="2" height="5" fill="#cfd9ea" stroke="#98a9c6"/><rect x="560.5" y="88.5" width="2" height="9" fill="#cfd9ea" stroke="#98a9c6"/><rect x="564.5" y="90.5" width="2" height="7" fill="#cfd9ea" stroke="#98a9c6"/><rect x="566.5" y="92.5" width="2" height="5" fill="#cfd9ea" stroke="#98a9c6"/><rect x="556.5" y="100.5" width="14" height="4" fill="#fde9c4" stroke="#f28a1e"/><path d="M569 101l6 6m0-6l-6 6" stroke="#e02020" stroke-width="2"/><rect x="551.5" y="128.5" width="29" height="27" fill="#000" opacity=".1"/><rect x="550.5" y="127.5" width="28" height="26" fill="url(#sbox)" stroke="#a3b6d0"/><path d="M578.5 128V153.5H551" stroke="#2f4d7c" fill="none"/><path d="M556.5 131V143.5H572" stroke="#b0bdd2" fill="none"/><rect x="558.5" y="137.5" width="2" height="5" fill="#cfd9ea" stroke="#98a9c6"/><rect x="560.5" y="133.5" width="2" height="9" fill="#cfd9ea" stroke="#98a9c6"/><rect x="564.5" y="135.5" width="2" height="7" fill="#cfd9ea" stroke="#98a9c6"/><rect x="566.5" y="137.5" width="2" height="5" fill="#cfd9ea" stroke="#98a9c6"/><rect x="556.5" y="145.5" width="14" height="4" fill="#fde9c4" stroke="#f28a1e"/></svg>
<!-- tabs -->
<div class="a" style="left:1347px;top:118px;width:8px;height:522px;background:linear-gradient(90deg,#b3cff0 0,#b3cff0 1px,#93b0d6 1px,#7b9ac6 3px,#7898c4 8px)"></div>
<svg class="a" style="left:1347px;top:118px" width="8" height="522"><path d="M8 5L3 10H8z" fill="#3d4f78"/><path d="M8 517L3 512H8z" fill="#3d4f78"/>
<rect x=".5" y="37.5" width="9" height="431" fill="#e9edf3" stroke="#3f5a8c"/><rect x="2" y="39" width="6" height="428" fill="#eef1f6"/>
<path d="M4 249.5h4M4 251.5h4M4 253.5h4M4 255.5h4" stroke="#5a6478"/></svg>
<div class="a" style="left:0;top:640px;width:1355px;height:17px;background:linear-gradient(#b7cbe6 0,#b7cbe6 1px,#7d9ecf 1px,#9bb5dc 15px,#5b7aa8 15px)"></div>
<div class="a" style="left:0;top:641px;width:62px;height:14px;background:linear-gradient(#e3ecf8 0,#d4e2f4 40%,#bcd2ee 50%,#d2e1f4 100%);border-top:1px solid #a3b9d8"></div>
<svg class="a" style="left:0;top:640px" width="62" height="16"><path d="M6 4h1v7H6z M12 4v7L8 7.5z M26 4v7L22 7.5z M36 4v7L40 7.5z M50 4v7L54 7.5z M55 4h1v7h-1z" fill="#1c3f8a"/></svg>
<svg class="a" style="left:62px;top:640px" width="230" height="17">
<defs><linearGradient id="tabi" x1="0" y1="0" x2="0" y2="1"><stop offset="0" stop-color="#e6eff9"/><stop offset=".5" stop-color="#d3e2f5"/><stop offset="1" stop-color="#bdd3ee"/></linearGradient><linearGradient id="taba" x1="0" y1="0" x2="0" y2="1"><stop offset="0" stop-color="#ffffff"/><stop offset=".6" stop-color="#ffffff"/><stop offset="1" stop-color="#d5e4f6"/></linearGradient></defs>
<path d="M181.5 15.5L192.5 1.5H224.5L211.5 15.5z" fill="url(#tabi)" stroke="#8aa5c9"/>
<path d="M181 15L191.5 2H223.5" stroke="#fff" fill="none"/>
<path d="M58.5 15.5L69.5 1.5H191.5L181.5 15.5z" fill="url(#tabi)" stroke="#8aa5c9"/>
<path d="M59 15L69.5 2H190.5" stroke="#fff" fill="none"/>
<path d="M.5 0V15.5H58.5L70 0z" fill="url(#taba)" stroke="#8aa5c9"/>
<path d="M1 .5H69" stroke="#fff" stroke-width="2"/>
<g transform="translate(193,1)"><path d="M5.5 6.5H14.5Q15.5 6.5 15.5 7.5V12.5Q15.5 13.5 14.5 13.5H12L10 15H8L6 13.5Q5.5 13.5 5.5 12.5z" fill="#e4ebf5" stroke="#5e7092"/><path d="M5 1.5v6M2 4.5h6M2.8 2.3l4.4 4.4M7.2 2.3L2.8 6.7" stroke="#e8901a" stroke-width="1.2"/><circle cx="5" cy="4.5" r="1.5" fill="#fff8d0"/></g>
</svg>
<div class="a" style="left:71px;top:641px;font-size:13px;font-weight:bold;color:#15428b;line-height:16px">Chart2</div>
<div class="a" style="left:136px;top:641px;font-size:12.2px;color:#2a4e9a;line-height:16px">Vehicles<span style="position:relative;top:-2px">_</span>Vauxhall</div>
<div class="a" style="left:778px;top:641px;width:7px;height:14px;background:#fff;border:1px solid #c9d8ec"></div>
<div class="a" style="left:780px;top:644px;width:1px;height:8px;background:#5a7ab0"></div>
<div class="a" style="left:785px;top:641px;width:562px;height:14px;background:#7898c4"></div>
<svg class="a" style="left:785px;top:641px" width="570" height="14"><path d="M6 7L11 2V12z" fill="#3d4f78"/><path d="M556 7L551 2V12z" fill="#3d4f78"/>
<defs><linearGradient id="hth" x1="0" y1="0" x2="0" y2="1"><stop offset="0" stop-color="#ffffff"/><stop offset=".45" stop-color="#e2e7ef"/><stop offset=".55" stop-color="#c4d0e0"/><stop offset="1" stop-color="#b4c3d8"/></linearGradient></defs>
<rect x="17.5" y=".5" width="527" height="13" rx="1" fill="url(#hth)" stroke="#3f5a8c"/>
<path d="M277.5 5v7M279.5 5v7M281.5 5v7M283.5 5v7" stroke="#5a6478"/>
<rect x="562" y="0" width="8" height="14" fill="#7a9bcf"/></svg>
<div class="a" style="left:0;top:655px;width:1355px;height:2px;background:#5b7aa8"></div>
</body></html>
